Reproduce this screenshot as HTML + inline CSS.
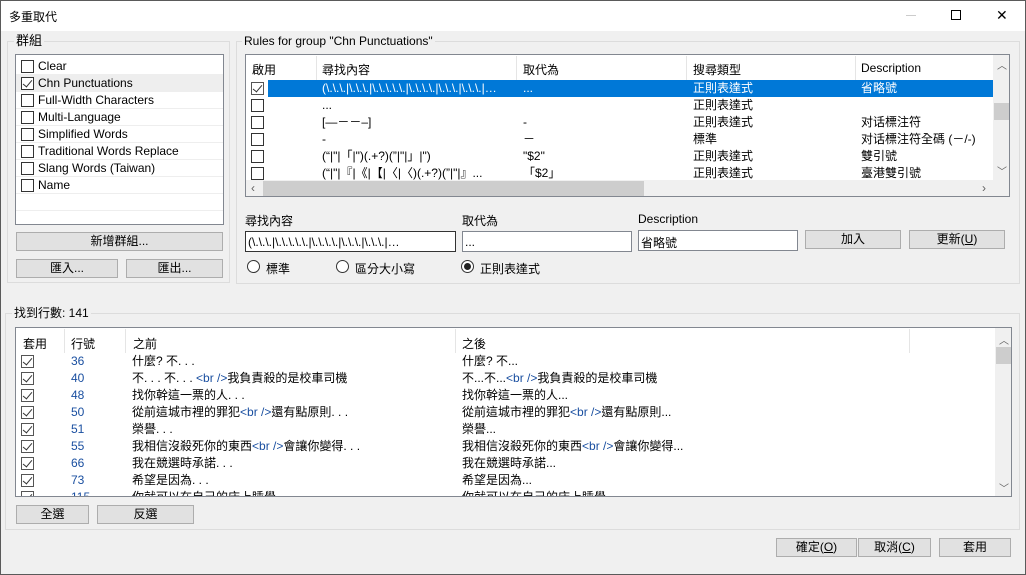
<!DOCTYPE html>
<html><head><meta charset="utf-8"><style>
*{box-sizing:border-box;margin:0;padding:0}
body{width:1026px;height:575px;overflow:hidden;background:#f0f0f0;font-family:"Liberation Sans","Noto Sans CJK TC",sans-serif;font-size:12px;color:#000;position:relative}
.a{position:absolute;white-space:nowrap}
.win{position:absolute;left:0;top:0;width:1026px;height:575px;border:1px solid #5a5a5a;}
.title{position:absolute;left:1px;top:1px;width:1024px;height:30px;background:#fff}
.gb{position:absolute;border:1px solid #dcdcdc}
.gl{position:absolute;background:#f0f0f0;padding:0 2px;line-height:14px}
.box{position:absolute;background:#fff;border:1px solid #828790}
.btn{position:absolute;background:#e1e1e1;border:1px solid #adadad;text-align:center;line-height:17px;height:19px}
.cb{position:absolute;width:13px;height:13px;border:1px solid #333;background:#fff}
.cb.on::after{content:"";position:absolute;left:3px;top:0px;width:4px;height:8px;border:solid #333;border-width:0 1.3px 1.3px 0;transform:rotate(40deg)}
.row{position:absolute;left:0;height:17px;line-height:17px}
.sep{position:absolute;width:1px;background:#e5e5e5}
.blue{color:#1a4fa0}
.rad{position:absolute;width:13px;height:13px;border:1px solid #333;border-radius:50%;background:#fff}
.rad.on::after{content:"";position:absolute;left:2px;top:2px;width:7px;height:7px;border-radius:50%;background:#222}
.sb{position:absolute;background:#f0f0f0}
</style></head><body>
<div class="title"></div>
<div class="a" style="left:9px;top:8px;font-size:12px">多重取代</div>
<div class="a" style="left:906px;top:15px;width:10px;height:1px;background:#ccc"></div>
<div class="a" style="left:951px;top:10px;width:10px;height:10px;border:1px solid #000"></div>
<div class="a" style="left:996px;top:7px;font-size:14px;line-height:16px">✕</div>

<!-- 群組 -->
<div class="gb" style="left:7px;top:41px;width:223px;height:242px"></div>
<div class="gl" style="left:14px;top:34px;font-size:13px">群組</div>
<div class="box" style="left:15px;top:54px;width:209px;height:171px">
 <div class="row" style="top:3px;width:207px;border-bottom:1px solid #eee"><div class="cb" style="left:5px;top:2px"></div><span class="a" style="left:22px">Clear</span></div>
 <div class="row" style="top:20px;width:207px;background:#eeeeee"><div class="cb on" style="left:5px;top:2px"></div><span class="a" style="left:22px">Chn Punctuations</span></div>
 <div class="row" style="top:37px;width:207px;border-bottom:1px solid #eee"><div class="cb" style="left:5px;top:2px"></div><span class="a" style="left:22px">Full-Width Characters</span></div>
 <div class="row" style="top:54px;width:207px;border-bottom:1px solid #eee"><div class="cb" style="left:5px;top:2px"></div><span class="a" style="left:22px">Multi-Language</span></div>
 <div class="row" style="top:71px;width:207px;border-bottom:1px solid #eee"><div class="cb" style="left:5px;top:2px"></div><span class="a" style="left:22px">Simplified Words</span></div>
 <div class="row" style="top:88px;width:207px;border-bottom:1px solid #eee"><div class="cb" style="left:5px;top:2px"></div><span class="a" style="left:22px">Traditional Words Replace</span></div>
 <div class="row" style="top:105px;width:207px;border-bottom:1px solid #eee"><div class="cb" style="left:5px;top:2px"></div><span class="a" style="left:22px">Slang Words (Taiwan)</span></div>
 <div class="row" style="top:122px;width:207px;border-bottom:1px solid #eee"><div class="cb" style="left:5px;top:2px"></div><span class="a" style="left:22px">Name</span></div>
 <div class="row" style="top:139px;width:207px;border-bottom:1px solid #eee"></div>
</div>
<div class="btn" style="left:16px;top:232px;width:207px">新增群組...</div>
<div class="btn" style="left:16px;top:259px;width:102px">匯入...</div>
<div class="btn" style="left:126px;top:259px;width:97px">匯出...</div>

<!-- Rules -->
<div class="gb" style="left:236px;top:41px;width:784px;height:243px"></div>
<div class="gl" style="left:242px;top:34px">Rules for group "Chn Punctuations"</div>
<div class="box" style="left:245px;top:54px;width:765px;height:143px;overflow:hidden">
 <div class="a" style="left:6px;top:6px">啟用</div>
 <div class="sep" style="left:70px;top:1px;height:24px"></div>
 <div class="a" style="left:76px;top:6px">尋找內容</div>
 <div class="sep" style="left:270px;top:1px;height:24px"></div>
 <div class="a" style="left:277px;top:6px">取代為</div>
 <div class="sep" style="left:440px;top:1px;height:24px"></div>
 <div class="a" style="left:447px;top:6px">搜尋類型</div>
 <div class="sep" style="left:609px;top:1px;height:24px"></div>
 <div class="a" style="left:615px;top:6px">Description</div>
 <div class="row" style="top:25px;left:22px;width:725px;background:#0078d7"></div>
 <div class="cb on" style="left:5px;top:27px;border-color:#555"></div>
 <div class="a" style="left:76px;top:25px;line-height:17px;color:#fff">(\.\.\.|\.\.\.|\.\.\.\.\.|\.\.\.\.|\.\.\.|\.\.\.|…</div>
 <div class="a" style="left:277px;top:25px;line-height:17px;color:#fff">...</div>
 <div class="a" style="left:447px;top:25px;line-height:17px;color:#fff">正則表達式</div>
 <div class="a" style="left:615px;top:25px;line-height:17px;color:#fff">省略號</div>

 <div class="cb" style="left:5px;top:44px"></div>
 <div class="a" style="left:76px;top:42px;line-height:17px">...</div>
 <div class="a" style="left:447px;top:42px;line-height:17px">正則表達式</div>

 <div class="cb" style="left:5px;top:61px"></div>
 <div class="a" style="left:76px;top:59px;line-height:17px">[—－－–]</div>
 <div class="a" style="left:277px;top:59px;line-height:17px">-</div>
 <div class="a" style="left:447px;top:59px;line-height:17px">正則表達式</div>
 <div class="a" style="left:615px;top:59px;line-height:17px">对话標注符</div>

 <div class="cb" style="left:5px;top:78px"></div>
 <div class="a" style="left:76px;top:76px;line-height:17px">-</div>
 <div class="a" style="left:277px;top:76px;line-height:17px">－</div>
 <div class="a" style="left:447px;top:76px;line-height:17px">標準</div>
 <div class="a" style="left:615px;top:76px;line-height:17px">对话標注符全碼 (－/-)</div>

 <div class="cb" style="left:5px;top:95px"></div>
 <div class="a" style="left:76px;top:93px;line-height:17px">(“|"|「|")(.+?)(”|"|」|")</div>
 <div class="a" style="left:277px;top:93px;line-height:17px">"$2"</div>
 <div class="a" style="left:447px;top:93px;line-height:17px">正則表達式</div>
 <div class="a" style="left:615px;top:93px;line-height:17px">雙引號</div>

 <div class="cb" style="left:5px;top:112px"></div>
 <div class="a" style="left:76px;top:110px;line-height:17px">(“|"|『|《|【|〈|〈)(.+?)(”|"|』...</div>
 <div class="a" style="left:277px;top:110px;line-height:17px">「$2」</div>
 <div class="a" style="left:447px;top:110px;line-height:17px">正則表達式</div>
 <div class="a" style="left:615px;top:110px;line-height:17px">臺港雙引號</div>

 <div class="sb" style="left:747px;top:0;width:17px;height:125px"></div>
 <div class="a" style="left:751px;top:2px;font-size:10px;color:#606060">︿</div>
 <div class="a" style="left:748px;top:48px;width:15px;height:17px;background:#cdcdcd"></div>
 <div class="a" style="left:751px;top:108px;font-size:10px;color:#606060">﹀</div>
 <div class="sb" style="left:0;top:125px;width:764px;height:17px"></div>
 <div class="a" style="left:17px;top:126px;width:381px;height:15px;background:#cdcdcd"></div>
 <div class="a" style="left:5px;top:126px;color:#606060">‹</div>
 <div class="a" style="left:736px;top:126px;color:#606060">›</div>
 <div class="sb" style="left:747px;top:125px;width:17px;height:17px"></div>
</div>

<div class="a" style="left:245px;top:212px">尋找內容</div>
<div class="box" style="left:245px;top:231px;width:211px;height:21px;border-color:#333"><span class="a" style="left:2px;top:3px">(\.\.\.|\.\.\.\.\.|\.\.\.\.|\.\.\.|\.\.\.|…</span></div>
<div class="a" style="left:462px;top:212px">取代為</div>
<div class="box" style="left:462px;top:231px;width:170px;height:21px"><span class="a" style="left:2px;top:3px">...</span></div>
<div class="a" style="left:638px;top:212px">Description</div>
<div class="box" style="left:638px;top:230px;width:160px;height:21px"><span class="a" style="left:2px;top:3px">省略號</span></div>
<div class="btn" style="left:805px;top:230px;width:96px">加入</div>
<div class="btn" style="left:909px;top:230px;width:96px">更新(<u>U</u>)</div>
<div class="rad" style="left:247px;top:260px"></div><div class="a" style="left:266px;top:260px">標準</div>
<div class="rad" style="left:336px;top:260px"></div><div class="a" style="left:355px;top:260px">區分大小寫</div>
<div class="rad on" style="left:461px;top:260px"></div><div class="a" style="left:480px;top:260px">正則表達式</div>

<!-- Found -->
<div class="gb" style="left:5px;top:313px;width:1015px;height:217px"></div>
<div class="gl" style="left:12px;top:306px">找到行數: 141</div>
<div class="box" style="left:15px;top:327px;width:997px;height:170px;overflow:hidden">
 <div class="a" style="left:7px;top:7px">套用</div>
 <div class="sep" style="left:48px;top:1px;height:24px"></div>
 <div class="a" style="left:55px;top:7px">行號</div>
 <div class="sep" style="left:109px;top:1px;height:24px"></div>
 <div class="a" style="left:117px;top:7px">之前</div>
 <div class="sep" style="left:439px;top:1px;height:24px"></div>
 <div class="a" style="left:446px;top:7px">之後</div>
 <div class="sep" style="left:893px;top:1px;height:24px"></div>
 <div class="sb" style="left:979px;top:0;width:17px;height:169px"></div>
 <div class="a" style="left:983px;top:4px;font-size:10px;color:#606060">︿</div>
 <div class="a" style="left:980px;top:19px;width:15px;height:17px;background:#cdcdcd"></div>
 <div class="a" style="left:983px;top:152px;font-size:10px;color:#606060">﹀</div>
</div>
<div class="btn" style="left:16px;top:505px;width:73px">全選</div>
<div class="btn" style="left:97px;top:505px;width:97px">反選</div>

<div class="btn" style="left:776px;top:538px;width:81px">確定(<u>O</u>)</div>
<div class="btn" style="left:858px;top:538px;width:73px">取消(<u>C</u>)</div>
<div class="btn" style="left:939px;top:538px;width:72px">套用</div>

<div style="position:absolute;left:16px;top:353px;width:978px;height:143px;overflow:hidden">
 <div class="row" style="top:0"><div class="cb on" style="left:5px;top:2px;border-color:#555"></div><span class="a blue" style="left:55px">36</span><span class="a" style="left:116px">什麼? 不. . .</span><span class="a" style="left:446px">什麼? 不...</span></div>
 <div class="row" style="top:17px"><div class="cb on" style="left:5px;top:2px;border-color:#555"></div><span class="a blue" style="left:55px">40</span><span class="a" style="left:116px">不. . . 不. . . <span class="blue">&lt;br /&gt;</span>我負責殺的是校車司機</span><span class="a" style="left:446px">不...不...<span class="blue">&lt;br /&gt;</span>我負責殺的是校車司機</span></div>
 <div class="row" style="top:34px"><div class="cb on" style="left:5px;top:2px;border-color:#555"></div><span class="a blue" style="left:55px">48</span><span class="a" style="left:116px">找你幹這一票的人. . .</span><span class="a" style="left:446px">找你幹這一票的人...</span></div>
 <div class="row" style="top:51px"><div class="cb on" style="left:5px;top:2px;border-color:#555"></div><span class="a blue" style="left:55px">50</span><span class="a" style="left:116px">從前這城市裡的罪犯<span class="blue">&lt;br /&gt;</span>還有點原則. . .</span><span class="a" style="left:446px">從前這城市裡的罪犯<span class="blue">&lt;br /&gt;</span>還有點原則...</span></div>
 <div class="row" style="top:68px"><div class="cb on" style="left:5px;top:2px;border-color:#555"></div><span class="a blue" style="left:55px">51</span><span class="a" style="left:116px">榮譽. . .</span><span class="a" style="left:446px">榮譽...</span></div>
 <div class="row" style="top:85px"><div class="cb on" style="left:5px;top:2px;border-color:#555"></div><span class="a blue" style="left:55px">55</span><span class="a" style="left:116px">我相信沒殺死你的東西<span class="blue">&lt;br /&gt;</span>會讓你變得. . .</span><span class="a" style="left:446px">我相信沒殺死你的東西<span class="blue">&lt;br /&gt;</span>會讓你變得...</span></div>
 <div class="row" style="top:102px"><div class="cb on" style="left:5px;top:2px;border-color:#555"></div><span class="a blue" style="left:55px">66</span><span class="a" style="left:116px">我在競選時承諾. . .</span><span class="a" style="left:446px">我在競選時承諾...</span></div>
 <div class="row" style="top:119px"><div class="cb on" style="left:5px;top:2px;border-color:#555"></div><span class="a blue" style="left:55px">73</span><span class="a" style="left:116px">希望是因為. . .</span><span class="a" style="left:446px">希望是因為...</span></div>
 <div class="row" style="top:136px"><div class="cb on" style="left:5px;top:2px;border-color:#555"></div><span class="a blue" style="left:55px">115</span><span class="a" style="left:116px">你就可以在自己的床上睡覺</span><span class="a" style="left:446px">你就可以在自己的床上睡覺</span></div>
</div>
<div class="win"></div>
</body></html>
